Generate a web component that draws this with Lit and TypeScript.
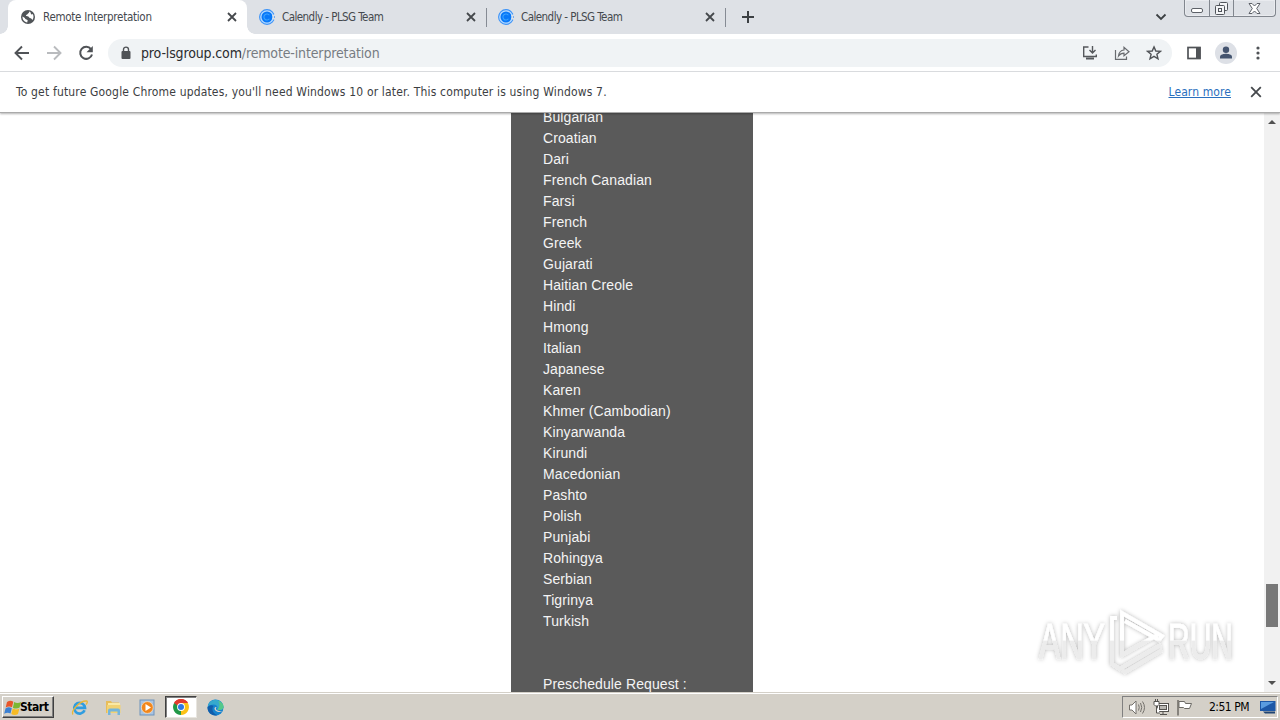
import { LitElement, html, css, svg } from "lit";
import { customElement } from "lit/decorators.js";

const LANGUAGES = [
  "Bulgarian", "Croatian", "Dari", "French Canadian", "Farsi", "French", "Greek", "Gujarati",
  "Haitian Creole", "Hindi", "Hmong", "Italian", "Japanese", "Karen", "Khmer (Cambodian)",
  "Kinyarwanda", "Kirundi", "Macedonian", "Pashto", "Polish", "Punjabi", "Rohingya", "Serbian",
  "Tigrinya", "Turkish",
];

const cross = (size: number, w: number) => html`<svg width=${size} height=${size} viewBox="0 0 10 10">
  <path d="M1 1L9 9M9 1L1 9" stroke="#45484c" stroke-width=${w} fill="none" /></svg>`;

const calendly = html`<svg width="16" height="16" viewBox="0 0 16 16">
  <circle cx="8" cy="8" r="7.4" fill="#b9dcff" stroke="#3d93f7" stroke-width="1.1" />
  <circle cx="8" cy="8" r="5.5" fill="#0878f8" />
  <path d="M10.400 6.300A3 3 0 1 0 10.400 9.700" fill="none" stroke="#3ba4ff" stroke-width="1.1" />
  <path d="M13 6.200L16 5V6.800L14.600 8L16 9.200V11L13 9.800L13.800 8z" fill="#dee1e6" /></svg>`;

const globe = html`<svg width="14" height="14" viewBox="0 0 14 14">
  <circle cx="7" cy="7" r="7" fill="#505458" />
  <path d="M8.200 1.600C8.600 3 7 3.300 6.600 4.100 6.200 5 5 4.600 4.900 5.700 5.600 6.400 7.500 6 8 7.200 8.300 8.300 9.600 7.700 10.200 8.500L11.600 9.900C12.800 8 12.800 6 11.800 4.100 11 4.800 9.900 4.600 9.800 3.600 9.800 2.600 9.300 2 8.200 1.600zM1.500 6.600C1.300 9.800 3.500 12.200 6.300 12.500 6.100 11.500 6.900 11.100 6.600 10.200 6 9.300 4.800 9.800 4.200 8.700 3.900 7.500 2.500 7.500 1.500 6.600z" fill="#fff" /></svg>`;

const flag4 = svg`
  <path d="M3 3C5.500 1.300 7.500 1.500 9.300 2.700L8 8.300C6 7.200 4 7.200 1.700 8.500z" fill="#e8562a" />
  <path d="M10.200 3.100C12.500 4.400 14.800 4.200 17 3L15.600 8.600C13.400 9.900 11 9.800 8.900 8.700z" fill="#7cb733" />
  <path d="M1.500 9.400C3.800 8 5.900 8.100 7.800 9.200L6.500 14.600C4.700 13.500 2.500 13.500 .2 14.800z" fill="#3b80d2" />
  <path d="M8.700 9.600C10.900 10.700 13.200 10.700 15.400 9.500L14 15C11.800 16.200 9.500 16.200 7.300 15z" fill="#f7bb26" />`;

@customElement("browser-tab")
class BrowserTab extends LitElement {
  static properties = { label: {}, active: { type: Boolean, reflect: true } };
  declare label: string;
  declare active: boolean;
  static styles = css`
    :host { display: flex; align-items: center; width: 239px; height: 34px; box-sizing: border-box;
      padding: 0 8px 0 12px; }
    .icon { display: flex; width: 16px; justify-content: center; margin-right: 7px; }
    .label { flex: 1; font: 11.5px/34px "DejaVu Sans Condensed", "DejaVu Sans", sans-serif; font-stretch: condensed;
      letter-spacing: -0.55px; color: #45494e; white-space: nowrap; }
    :host([active]) .label { letter-spacing: -0.28px; }
    .close { display: flex; padding: 2px; }
    svg { display: block; }
  `;
  render() {
    return html`<span class="icon">${this.active ? globe : calendly}</span>
      <span class="label">${this.label}</span><span class="close">${cross(10, 1.8)}</span>`;
  }
}

@customElement("app-root")
class AppRoot extends LitElement {
  static styles = css`
    :host { display: flex; flex-direction: column; position: relative; width: 1280px; height: 720px; overflow: hidden;
      background: #fff; font-family: "DejaVu Sans Condensed", "DejaVu Sans", sans-serif; font-stretch: condensed; }
    svg { display: block; flex: none; }
    .strip { display: flex; height: 34px; background: #dee1e6; padding-left: 8px; }
    .current { width: 239px; background: #fff; border-radius: 8px 8px 0 0; display: flex; }
    .corner { align-self: flex-end; width: 8px; height: 8px; margin-left: -8px; background: radial-gradient(circle at 0 0, #dee1e6 7.5px, #fff 8px); }
    .corner.right { margin-left: 0; margin-right: -8px; background: radial-gradient(circle at 100% 0, #dee1e6 7.5px, #fff 8px); }
    .divider { width: 1px; height: 19px; align-self: center; background: #868b94; margin-right: -1px; }
    .plus { align-self: center; margin-left: 17px; }
    .chevron { align-self: center; margin-left: auto; }
    .window { display: flex; width: 92px; height: 17px; margin: 0 4px 0 17px; border: 1px solid #81868e; border-top: 0;
      border-radius: 0 0 4px 4px; box-sizing: border-box; box-shadow: inset 0 0 0 1px #e9ebef; }
    .window span { display: flex; justify-content: center; align-items: center; width: 24px; border-right: 1px solid #81868e; }
    .window span:first-child { padding-top: 4px; height: 12px; }
    .window span:first-child { height: auto; }
    .window span:last-child { width: 41px; border: 0; }
    .toolbar { display: flex; align-items: center; height: 37px; border-bottom: 1px solid #d9dbde; padding: 0 12px 0 14px; background: #fff; }
    .nav { display: flex; gap: 16px; }
    .address { display: flex; align-items: center; width: 1064px; height: 28px; margin-left: 14px; box-sizing: border-box;
      border-radius: 14px; background: #f0f3f5; padding: 0 10px 0 12px; }
    .url { flex: 1; margin-left: 9px; font-size: 14px; line-height: 28px; letter-spacing: -0.14px; color: #777c82; white-space: nowrap; }
    .url b { font-weight: normal; color: #2b2c2f; }
    .actions { display: flex; gap: 16px; }
    .side { margin-left: 14px; }
    .avatar { margin-left: 13px; }
    .dots { margin-left: 11px; }
    .info { display: flex; align-items: center; height: 40px; padding: 0 18px 0 16px; font-size: 12px; color: #3c3e42; background: #fff; z-index: 1; box-shadow: 0 1px 0 #aaa, 0 2px 2px rgba(0,0,0,.3); }
    .message { flex: 1; white-space: nowrap; letter-spacing: .167px; }
    .link { color: #2a6fbe; text-decoration: underline; margin-right: 19px; white-space: nowrap; letter-spacing: .1px; }
    .page { display: flex; flex: 1; min-height: 0; overflow: hidden; }
    .column { width: 242px; margin-left: 511px; padding-left: 32px; box-sizing: border-box; background: #5a5a5a; overflow: hidden; }
    .list { margin: -5px 0 0; padding: 0; list-style: none; font: 14px/21px "Liberation Sans", Arial, sans-serif; color: #f4f4f4; letter-spacing: .1px; white-space: nowrap; }
    .gap { height: 42px; }
    .scroll { display: flex; flex-direction: column; align-items: center; width: 16px; margin-left: auto; background: #f1f1f1; padding: 8px 0 7px; box-sizing: border-box; }
    .thumb { width: 12px; height: 43px; background: #787878; margin: 460px 0 auto; }
    .taskbar { display: flex; align-items: center; height: 28px; box-sizing: border-box; background: #d4d0c8; border-top: 1px solid #d4d0c8; box-shadow: inset 0 1px #fff; padding: 1px 2px 0; }
    .start { display: flex; align-items: center; width: 52px; height: 22px; box-sizing: border-box; padding-left: 1px;
      border: 1px solid; border-color: #fff #404040 #404040 #fff; box-shadow: inset -1px -1px #808080; font-size: 12px; font-weight: bold; letter-spacing: -.45px; }
    .start span { margin-left: -1px; }
    .apps { display: flex; align-items: center; margin-left: 8px; }
    .app { display: flex; align-items: center; justify-content: center; width: 34px; height: 22px; box-sizing: border-box; }
    .app.on { width: 32px; margin: 0 1px; background: #fff; border: 1px solid; border-color: #404040 #e8e5df #e8e5df #404040; box-shadow: inset 1px 1px #808080; }
    .tray { display: flex; align-items: center; margin-left: auto; width: 156px; height: 22px; box-sizing: border-box; border: 1px solid;
      border-color: #808080 #fff #fff #808080; padding: 0 1px 0 5px; font-size: 12px; }
    .tray .icons { display: flex; gap: 7px; }
    .clock { margin-left: auto; margin-right: 11px; letter-spacing: -.5px; white-space: nowrap; }
    .mark { position: absolute; left: 1034px; top: 602px; overflow: visible; }
    .mark text { font: 50px "Liberation Sans Narrow", "Liberation Sans", sans-serif; }
  `;

  render() {
    return html`
      <div class="strip">
        <div class="corner"></div>
        <div class="current"><browser-tab active label="Remote Interpretation"></browser-tab></div>
        <div class="corner right"></div>
        <browser-tab label="Calendly - PLSG Team"></browser-tab>
        <div class="divider"></div>
        <browser-tab label="Calendly - PLSG Team"></browser-tab>
        <div class="divider"></div>
        <svg class="plus" width="12" height="12" viewBox="0 0 12 12"><path d="M6 0V12M0 6H12" stroke="#3c4043" stroke-width="2" /></svg>
        <svg class="chevron" width="12" height="8" viewBox="0 0 12 8"><path d="M1.500 1.500L6 6L10.500 1.500" fill="none" stroke="#3c4043" stroke-width="1.800" /></svg>
        <div class="window">
          <span><svg width="12" height="5"><rect x=".5" y=".5" width="11" height="4" rx="1.500" fill="#fff" stroke="#5d6168" /></svg></span>
          <span><svg width="13" height="13" viewBox="0 0 13 13" fill="#f3f4f6" stroke="#50545a"><rect x="4.500" y=".5" width="8" height="8" rx="1" /><rect x=".5" y="3.500" width="9" height="9" rx="1" /><rect x="3.500" y="6.500" width="3" height="3" /></svg></span>
          <span><svg width="13" height="11" viewBox="0 0 13 11"><path d="M1 .5H4L6.500 3L9 .5H12L8.700 5.500L12 10.500H9L6.500 8L4 10.500H1L4.300 5.500z" fill="#fff" stroke="#5d6168" /></svg></span>
        </div>
      </div>
      <div class="toolbar">
        <div class="nav">
          <svg width="16" height="16" viewBox="0 0 16 16"><path d="M15 8H2M8 1.500L1.500 8L8 14.500" fill="none" stroke="#505357" stroke-width="1.900" /></svg>
          <svg width="16" height="16" viewBox="0 0 16 16"><path d="M1 8H14M8 1.500L14.500 8L8 14.500" fill="none" stroke="#b9bbbe" stroke-width="1.900" /></svg>
          <svg width="16" height="16" viewBox="0 0 16 16"><path d="M13 4.200A6 6 0 1 0 14 9.500" fill="none" stroke="#505357" stroke-width="2" /><path d="M14.800 1V7.300H8.500z" fill="#505357" /></svg>
        </div>
        <div class="address">
          <svg width="12" height="14" viewBox="0 0 12 14"><rect x="1.500" y="5" width="9" height="8" rx="1" fill="#505357" /><path d="M3.500 6V3.600A2.500 2.500 0 0 1 8.500 3.600V6" fill="none" stroke="#505357" stroke-width="1.400" /></svg>
          <span class="url"><b>pro-lsgroup.com</b>/remote-interpretation</span>
          <div class="actions">
            <svg width="16" height="16" viewBox="0 0 16 16" fill="none" stroke="#55585c" stroke-width="1.400"><path d="M6.500 2H1.700V11.500H14.300V9.500M10.500 1V7.500M7.500 5L10.500 8L13.500 5" /><path d="M4 13.500H12" stroke-width="2" /></svg>
            <svg width="16" height="16" viewBox="0 0 16 16" fill="none" stroke="#686b6f" stroke-width="1.200"><path d="M1.500 5V14.300H12.500V11.500M4.500 11C5 7 7 5.300 10 5V2.300L15 6.700L10 10.800V8.200C7.500 8.200 6 9 4.500 11z" /></svg>
            <svg width="16" height="16" viewBox="0 0 16 16"><path d="M8 1.900L9.800 6L14.400 6.400L10.900 9.300L12 13.800L8 11.400L4 13.800L5.100 9.300L1.600 6.400L6.200 6z" fill="none" stroke="#505357" stroke-width="1.400" /></svg>
          </div>
        </div>
        <svg class="side" width="16" height="16" viewBox="0 0 16 16"><rect x="2" y="2.500" width="12" height="11" fill="#fff" stroke="#505357" stroke-width="1.700" /><path d="M10 2H14.500V14H10z" fill="#505357" /></svg>
        <svg class="avatar" width="22" height="22" viewBox="0 0 22 22"><circle cx="11" cy="11" r="11" fill="#dde0e6" /><circle cx="11" cy="7.700" r="3.200" fill="#44546f" /><path d="M5 16.500V14.700C5 12.500 9 11.800 11 11.800S17 12.500 17 14.700V16.500z" fill="#44546f" /></svg>
        <svg class="dots" width="20" height="16" viewBox="0 0 20 16" fill="#505357"><circle cx="10" cy="3" r="1.600" /><circle cx="10" cy="8" r="1.600" /><circle cx="10" cy="13" r="1.600" /></svg>
      </div>
      <div class="info">
        <span class="message">To get future Google Chrome updates, you'll need Windows 10 or later. This computer is using Windows 7.</span>
        <span class="link">Learn more</span>${cross(12, 1.5)}
      </div>
      <div class="page">
        <div class="column">
          <ul class="list">
            ${LANGUAGES.map((l) => html`<li>${l}</li>`)}
            <li class="gap"></li>
            <li>Preschedule Request :</li>
          </ul>
        </div>
        <div class="scroll">
          <svg width="8" height="4"><path d="M0 4L4 0L8 4z" fill="#505050" /></svg>
          <div class="thumb"></div>
          <svg width="8" height="4"><path d="M0 0L4 4L8 0z" fill="#505050" /></svg>
        </div>
      </div>
      <div class="taskbar">
        <div class="start"><svg width="17" height="17" viewBox="0 0 17 17">${flag4}</svg><span>Start</span></div>
        <div class="apps">
          <div class="app"><svg width="17" height="17" viewBox="0 0 17 17"><path d="M13.600 11.300A5.400 5.400 0 1 1 14 8.800H5" fill="none" stroke="#2f9de0" stroke-width="2.700" /><path d="M2 15.500C-.5 12 9 1.500 15.500 2C17 2.300 16 4.500 15 5.500" fill="none" stroke="#e9b738" stroke-width="1.300" /></svg></div>
          <div class="app"><svg width="17" height="17" viewBox="0 0 17 17"><path d="M1 2H6L7 3.500H14V14H1z" fill="#e8bd5a" /><path d="M3 4H15V12H3z" fill="#fae9a5" /><path d="M2 6H15.500V14H2z" fill="#f2d273" /><path d="M3 16V11.500Q3 9.500 5 9.500H13Q15 9.500 15 11.500V16H12.500V12.500H5.500V16z" fill="#73b5dc" /></svg></div>
          <div class="app"><svg width="17" height="17" viewBox="0 0 17 17"><rect x="1" y="1" width="14" height="15" fill="#a9c4e2" stroke="#6f93bb" /><circle cx="8.300" cy="8.500" r="5.900" fill="#f1861c" stroke="#fff3df" stroke-width=".6" /><path d="M6.500 5L12 8.500L6.500 12z" fill="#fff" /></svg></div>
          <div class="app on"><svg width="16" height="16" viewBox="0 0 16 16"><path d="M8 8L1.100 4A8 8 0 0 1 14.900 4z" fill="#e23b2e" /><path d="M8 8L14.900 4A8 8 0 0 1 8 16z" fill="#fbc116" /><path d="M8 8V16A8 8 0 0 1 1.100 4z" fill="#229847" /><path d="M8 4H14.900L11.500 10L8 8z" fill="#fbc116" /><path d="M1.100 4L4.500 10L8 8L6 4z" fill="#229847" /><path d="M1.100 4A8 8 0 0 1 14.900 4H8L4.500 6.500z" fill="#e23b2e" /><circle cx="8" cy="8" r="3.900" fill="#fff" /><circle cx="8" cy="8" r="3" fill="#2f78e4" /></svg></div>
          <div class="app"><svg width="17" height="17" viewBox="0 0 17 17"><circle cx="8.500" cy="8.500" r="8" fill="#1683cf" /><path d="M.8 7.500C2 1 8-.5 12 1.500C16 3.500 17.500 8 15.500 10.200C14 11.500 11 11.300 10 10.200C11.500 8.500 10 5.500 6.500 5.500C4 5.500 2 6.300 .8 7.500z" fill="#36a9cd" /><path d="M11 2C14.500 2.500 17.300 5.500 16.400 8.700C15.500 11 12.500 11.300 10.500 10.500C13 7.500 13 4 11 2z" fill="#55c88a" /><path d="M6.500 7C4 10 6 15 10.500 16.200C5 17.500 .3 13.500 .5 8.500C2 6 5 5.500 6.500 7z" fill="#125daa" /><path d="M9.600 8.300C7.800 10 9.700 12.600 15.300 12.100C12 14.500 7 12 7.500 9C8 8 9 7.800 9.600 8.300z" fill="#d4d0c8" /></svg></div>
        </div>
        <div class="tray">
          <div class="icons">
            <svg width="18" height="17" viewBox="0 0 18 17" fill="#fff" stroke="#74716c"><path d="M1.500 6H4L8 2V15L4 11H1.500z" /><path d="M10.500 5.500Q12 8.500 10.500 11.500M12.500 4Q15 8.500 12.500 13M14.500 2.500Q18.500 8.500 14.500 14.500" fill="none" /></svg>
            <svg width="16" height="17" viewBox="0 0 16 17" fill="#fff" stroke="#55534f"><rect x="4.500" y="4.500" width="11" height="8" /><rect x="6.500" y="6.500" width="7" height="4" fill="#b9b7b2" /><path d="M7 15.500H14M10 12.500V15.500M1 2.500H6V5.500L4.500 7H2.500L1 5.500zM2.500 2V0M4.500 2V0M3.500 7V14H7" /></svg>
            <svg width="17" height="17" viewBox="0 0 17 17" fill="#fff" stroke="#6c6a65"><path d="M2 1V16.500" stroke-width="1.500" /><path d="M3 2.500H8.500L9.500 4.500H15.500L13.500 9.500H8.500L7.500 8.500H3z" /></svg>
          </div>
          <span class="clock">2:51 PM</span>
          <svg width="16" height="16" viewBox="0 0 16 16"><rect y="2" width="15.500" height="10" fill="#1d58a7" /><path d="M1 3H14L1 10z" fill="#5a9ce0" /><path d="M3 12.500H15V14.500H5z" fill="#1f4473" /></svg>
        </div>
      </div>
      <svg class="mark" width="206" height="78" viewBox="0 0 206 78">
        <defs>
          <linearGradient id="g" x1="0" y1="0" x2="0" y2="78" gradientUnits="userSpaceOnUse"><stop offset=".49" stop-color="#fff" /><stop offset=".5" stop-color="#ececec" /></linearGradient>
          <filter id="s" x="-10%" y="-20%" width="120%" height="140%"><feDropShadow dx="0" dy="0" stdDeviation="1.900" flood-color="#000" flood-opacity=".3" /></filter>
        </defs>
        <g filter="url(#s)" fill="url(#g)" stroke="url(#g)">
          <text x="5" y="57" stroke-width=".6" textLength="66" lengthAdjust="spacingAndGlyphs">ANY</text>
          <text x="134" y="57" stroke-width=".6" textLength="65" lengthAdjust="spacingAndGlyphs">RUN</text>
          <g fill="none" stroke-width="3.800"><path d="M83 16H78V62L86 67L127 43" /><path d="M88 54V11L128 34L125 38L91 19" /><path d="M88 26V53L125 32M88 68L91 70L128 48" /></g>
        </g>
      </svg>
    `;
  }
}
